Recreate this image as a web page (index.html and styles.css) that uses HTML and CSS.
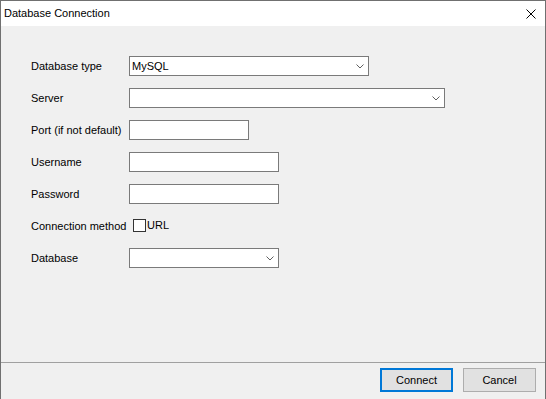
FILE: index.html
```html
<!DOCTYPE html>
<html lang="en">
<head>
    <meta charset="UTF-8">
    <title>Database Connection</title>
    <link rel="stylesheet" href="styles.css">
</head>
<body>
    <div class="window">
        <div class="titlebar">
            <span class="title">Database Connection</span>
            <span class="close">
                <svg width="10" height="10" viewBox="0 0 10 10"><path d="M0.5 0.5 L9.5 9.5 M9.5 0.5 L0.5 9.5" stroke="#000" stroke-width="1" fill="none"/></svg>
            </span>
        </div>
        <div class="dialog-body">
            <form class="conn-form">
                <label>Database type</label>
                <div class="combo w-240">
                    <span>MySQL</span>
                    <svg class="chevron" width="8" height="5" viewBox="0 0 8 5"><polyline points="0.5,0.5 4,4 7.5,0.5" stroke="#606060" fill="none"/></svg>
                </div>

                <label>Server</label>
                <div class="combo w-316">
                    <span></span>
                    <svg class="chevron" width="8" height="5" viewBox="0 0 8 5"><polyline points="0.5,0.5 4,4 7.5,0.5" stroke="#606060" fill="none"/></svg>
                </div>

                <label>Port (if not default)</label>
                <div class="field w-120"></div>

                <label>Username</label>
                <div class="field w-150"></div>

                <label>Password</label>
                <div class="field w-150"></div>

                <label>Connection method</label>
                <div class="check-row">
                    <span class="checkbox"></span>
                    <span>URL</span>
                </div>

                <label>Database</label>
                <div class="combo w-150">
                    <span></span>
                    <svg class="chevron" width="8" height="5" viewBox="0 0 8 5"><polyline points="0.5,0.5 4,4 7.5,0.5" stroke="#606060" fill="none"/></svg>
                </div>
            </form>
            <div class="footer">
                <button type="button" class="btn btn-default">Connect</button>
                <button type="button" class="btn">Cancel</button>
            </div>
        </div>
    </div>
</body>
</html>
```

FILE: styles.css
```css
:root {
    --window-bg: #f0f0f0;
    --border-color: #7a7a7a;
    --text-color: #000000;
    --button-bg: #e1e1e1;
    --button-border: #adadad;
    --accent-color: #0078d7;
}
body {
    margin: 0;
    padding: 0;
    font-family: 'Liberation Sans', Arial, sans-serif;
    font-size: 11px;
    color: var(--text-color);
}
.window {
    box-sizing: border-box;
    width: 546px;
    height: 399px;
    border: 1px solid #707070;
    border-bottom: none;
    display: flex;
    flex-direction: column;
    background-color: var(--window-bg);
}
.titlebar {
    height: 25px;
    line-height: 25px;
    background-color: #ffffff;
    display: flex;
    justify-content: space-between;
    align-items: center;
    padding: 0 8px 0 3px;
}
.close {
    display: flex;
    margin-right: 1px;
}
.dialog-body {
    flex: 1;
    display: flex;
    flex-direction: column;
}
.conn-form {
    flex: 1;
    display: grid;
    grid-template-columns: 98px auto;
    grid-auto-rows: 20px;
    row-gap: 12px;
    align-content: start;
    justify-items: start;
    align-items: center;
    padding: 30px 0 0 30px;
    margin: 0;
}
.conn-form label {
    line-height: 20px;
    white-space: nowrap;
}
.field,
.combo {
    box-sizing: border-box;
    height: 20px;
    border: 1px solid var(--border-color);
    background-color: #ffffff;
}
.combo {
    display: flex;
    align-items: center;
    justify-content: space-between;
    padding: 0 4px 0 2px;
}
.chevron {
    display: block;
}
.w-120 { width: 120px; }
.w-150 { width: 150px; }
.w-240 { width: 240px; }
.w-316 { width: 316px; }
.check-row {
    display: flex;
    align-items: center;
    gap: 1px;
    margin-left: 4px;
    margin-top: -2px;
}
.checkbox {
    box-sizing: border-box;
    width: 13px;
    height: 13px;
    border: 1px solid #333333;
    background-color: #ffffff;
}
.footer {
    box-sizing: border-box;
    flex: none;
    height: 37px;
    border-top: 1px solid #a0a0a0;
    display: flex;
    justify-content: flex-end;
    align-items: flex-start;
    gap: 10px;
    padding: 5px 9px 0 0;
}
.btn {
    box-sizing: border-box;
    width: 73px;
    height: 24px;
    background-color: var(--button-bg);
    border: 1px solid var(--button-border);
    font-family: inherit;
    font-size: 11px;
    color: var(--text-color);
    padding: 0;
    cursor: pointer;
}
.btn-default {
    border: 2px solid var(--accent-color);
}
```
